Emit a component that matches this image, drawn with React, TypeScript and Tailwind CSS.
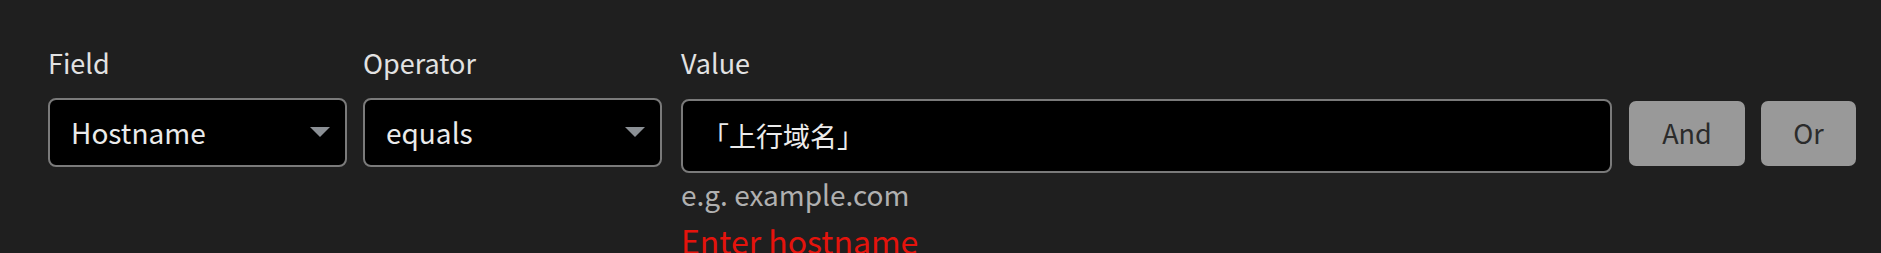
import React from 'react'

const font = { fontFamily: '"Noto Sans CJK SC", "Noto Sans", sans-serif' }

function Caret() {
  return (
    <svg width="20" height="10" viewBox="0 0 20 10" className="shrink-0">
      <path d="M0 0 H20 L10 10 Z" fill="#8b9095" />
    </svg>
  )
}

function SelectBox({ label, value }: { label: string; value: string }) {
  return (
    <div className="w-[299px] shrink-0">
      <div className="text-[27px] leading-[34px] text-[#e2e2e2]">{label}</div>
      <div className="mt-[18px] h-[69px] rounded-[8px] border-2 border-[#7a7a7a] bg-black pl-[21px] pr-[15px] pb-[2px] flex items-center justify-between">
        <span className="text-[28px] leading-[34px] text-[#ebebeb]">{value}</span>
        <Caret />
      </div>
    </div>
  )
}

export default function App() {
  return (
    <div className="h-[253px] w-full overflow-hidden bg-[#1f1f1f] pl-[48px] pt-[46px]" style={font}>
      <div className="flex items-start">
        <SelectBox label="Field" value="Hostname" />
        <div className="ml-[16px]">
          <SelectBox label="Operator" value="equals" />
        </div>

        <div className="ml-[19px] w-[931px] shrink-0">
          <div className="text-[27px] leading-[34px] text-[#e2e2e2]">Value</div>
          <div className="mt-[19px] h-[74px] rounded-[8px] border-2 border-[#7a7a7a] bg-black px-[19px] flex items-center">
            <span className="text-[27px] leading-[34px] text-[#ebebeb]">「上行域名」</span>
          </div>
          <div className="mt-[3px] text-[28px] leading-[36px] text-[#b0b0b0]">e.g. example.com</div>
          <div className="mt-[10px] text-[32px] leading-[36px] text-[#e5130c]">Enter hostname</div>
        </div>

        <button className="ml-[17px] mt-[55px] h-[65px] w-[116px] shrink-0 rounded-[7px] bg-[#999999] text-[27px] text-[#2b2b2b]">
          And
        </button>
        <button className="ml-[16px] mt-[55px] h-[65px] w-[95px] shrink-0 rounded-[7px] bg-[#999999] text-[27px] text-[#2b2b2b]">
          Or
        </button>
      </div>
    </div>
  )
}
